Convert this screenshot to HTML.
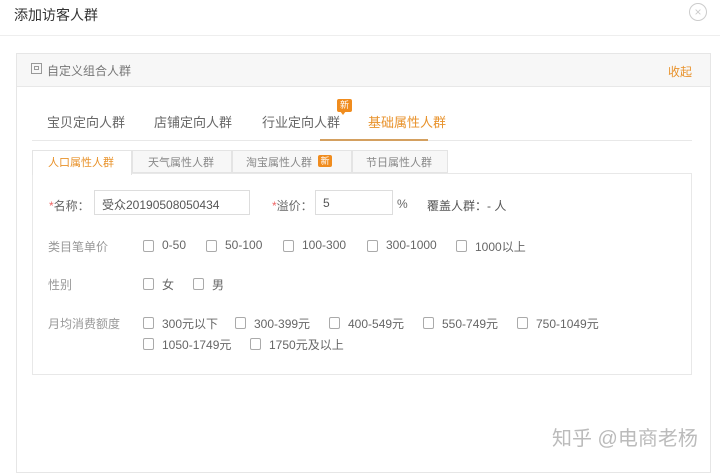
<!DOCTYPE html>
<html><head><meta charset="utf-8"><style>
*{margin:0;padding:0;box-sizing:border-box}
body{width:720px;height:465px;background:#fff;font-family:"Liberation Sans","Noto Sans CJK SC",sans-serif;font-size:12px;color:#666;position:relative;overflow:hidden}
.a{position:absolute;white-space:nowrap}
.cb{position:absolute;width:11px;height:12px;border:1px solid #aaa;border-radius:2px;background:#fff}
.lbl{color:#999}
.o{color:#e8922b}
</style></head><body>
<div class="a" style="left:14px;top:5px;font-size:14px;color:#333">添加访客人群</div>
<div class="a" style="left:689px;top:3px;width:18px;height:18px;border:1px solid #ccc;border-radius:50%;color:#ccc;font-size:12px;line-height:16px;text-align:center">×</div>
<div class="a" style="left:0;top:35px;width:720px;height:1px;background:#eee"></div>

<div class="a" style="left:16px;top:53px;width:695px;height:420px;border:1px solid #e6e6e6"></div>
<div class="a" style="left:17px;top:54px;width:693px;height:33px;background:#f7f7f7;border-bottom:1px solid #e8e8e8"></div>
<div class="a" style="left:31px;top:63px;width:11px;height:11px;border:1px solid #999"></div>
<div class="a" style="left:34px;top:66px;width:5px;height:4px;border:1px solid #999"></div>
<div class="a" style="left:47px;top:62px;color:#777">自定义组合人群</div>
<div class="a o" style="left:668px;top:63px">收起</div>

<div class="a" style="left:47px;top:112px;font-size:13px">宝贝定向人群</div>
<div class="a" style="left:154px;top:112px;font-size:13px">店铺定向人群</div>
<div class="a" style="left:262px;top:112px;font-size:13px">行业定向人群</div>
<div class="a" style="left:337px;top:99px;width:15px;height:13px;background:#f08c1e;color:#fff;font-size:9px;line-height:13px;text-align:center;border-radius:2px">新</div>
<div class="a" style="left:340px;top:111px;width:0;height:0;border-left:3px solid transparent;border-right:3px solid transparent;border-top:4px solid #f08c1e"></div>
<div class="a o" style="left:368px;top:112px;font-size:13px">基础属性人群</div>
<div class="a" style="left:32px;top:140px;width:660px;height:1px;background:#e8e8e8"></div>
<div class="a" style="left:320px;top:139px;width:108px;height:2px;background:#d4a060"></div>

<div class="a" style="left:32px;top:150px;width:100px;height:25px;border:1px solid #e4e4e4;border-bottom:none;background:#fff;z-index:2"></div>
<div class="a" style="left:132px;top:150px;width:100px;height:23px;border:1px solid #e4e4e4;background:#f7f7f7"></div>
<div class="a" style="left:232px;top:150px;width:120px;height:23px;border:1px solid #e4e4e4;background:#f7f7f7"></div>
<div class="a" style="left:352px;top:150px;width:96px;height:23px;border:1px solid #e4e4e4;background:#f7f7f7"></div>
<div class="a o" style="left:48px;top:154px;z-index:3;font-size:11px">人口属性人群</div>
<div class="a" style="left:148px;top:154px;font-size:11px;color:#888">天气属性人群</div>
<div class="a" style="left:246px;top:154px;font-size:11px;color:#888">淘宝属性人群</div>
<div class="a" style="left:318px;top:155px;width:14px;height:12px;background:#f08c1e;color:#fff;font-size:9px;line-height:12px;text-align:center;border-radius:2px">新</div>
<div class="a" style="left:366px;top:154px;font-size:11px;color:#888">节日属性人群</div>
<div class="a" style="left:32px;top:173px;width:660px;height:202px;border:1px solid #e8e8e8"></div>

<div class="a" style="left:49px;top:197px;color:#666"><span style="color:#e66">*</span>名称：</div>
<div class="a" style="left:94px;top:190px;width:156px;height:25px;border:1px solid #ddd;padding:5px 7px;color:#555">受众20190508050434</div>
<div class="a" style="left:272px;top:197px;color:#666"><span style="color:#e66">*</span>溢价：</div>
<div class="a" style="left:315px;top:190px;width:78px;height:25px;border:1px solid #ddd;padding:5px 7px;color:#555">5</div>
<div class="a" style="left:397px;top:197px">%</div>
<div class="a" style="left:427px;top:197px;color:#555">覆盖人群：- 人</div>

<div class="a lbl" style="left:48px;top:238px">类目笔单价</div>
<div class="cb" style="left:143px;top:240px"></div><div class="a" style="left:162px;top:238px">0-50</div>
<div class="cb" style="left:206px;top:240px"></div><div class="a" style="left:225px;top:238px">50-100</div>
<div class="cb" style="left:283px;top:240px"></div><div class="a" style="left:302px;top:238px">100-300</div>
<div class="cb" style="left:367px;top:240px"></div><div class="a" style="left:386px;top:238px">300-1000</div>
<div class="cb" style="left:456px;top:240px"></div><div class="a" style="left:475px;top:238px">1000以上</div>

<div class="a lbl" style="left:48px;top:276px">性别</div>
<div class="cb" style="left:143px;top:278px"></div><div class="a" style="left:162px;top:276px">女</div>
<div class="cb" style="left:193px;top:278px"></div><div class="a" style="left:212px;top:276px">男</div>

<div class="a lbl" style="left:48px;top:315px">月均消费额度</div>
<div class="cb" style="left:143px;top:317px"></div><div class="a" style="left:162px;top:315px">300元以下</div>
<div class="cb" style="left:235px;top:317px"></div><div class="a" style="left:254px;top:315px">300-399元</div>
<div class="cb" style="left:329px;top:317px"></div><div class="a" style="left:348px;top:315px">400-549元</div>
<div class="cb" style="left:423px;top:317px"></div><div class="a" style="left:442px;top:315px">550-749元</div>
<div class="cb" style="left:517px;top:317px"></div><div class="a" style="left:536px;top:315px">750-1049元</div>
<div class="cb" style="left:143px;top:338px"></div><div class="a" style="left:162px;top:336px">1050-1749元</div>
<div class="cb" style="left:250px;top:338px"></div><div class="a" style="left:269px;top:336px">1750元及以上</div>

<div class="a" style="left:552px;top:422px;font-size:20px;color:#bbb">知乎 @电商老杨</div>
</body></html>
